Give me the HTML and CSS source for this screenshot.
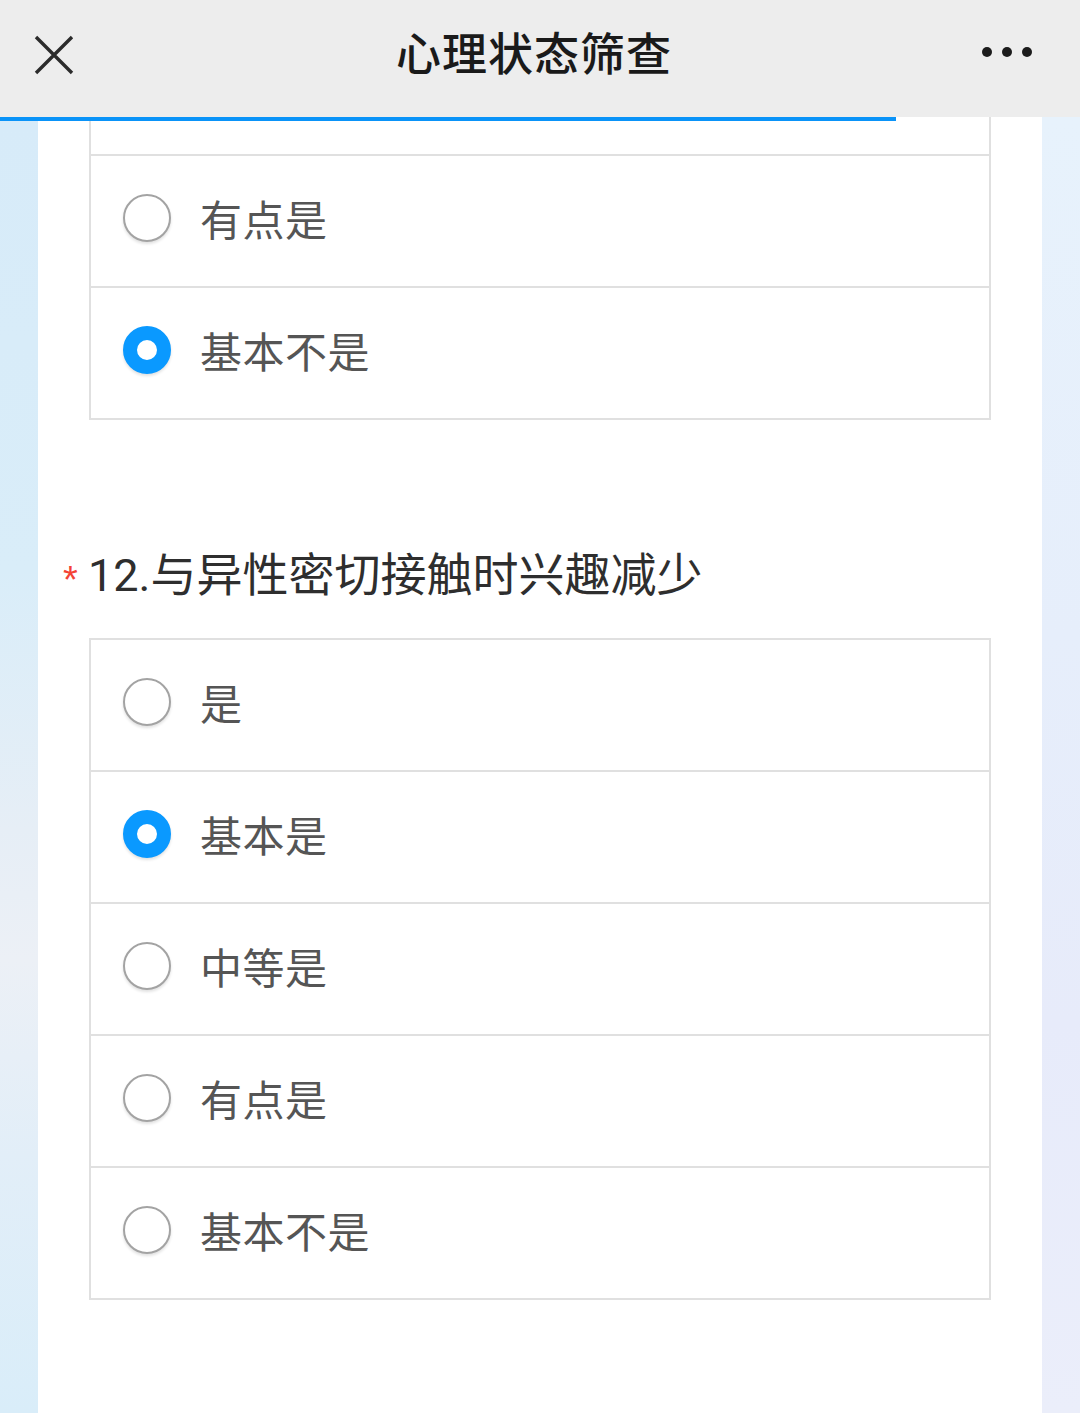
FILE: index.html
```html
<!DOCTYPE html>
<html lang="zh-CN">
<head>
<meta charset="utf-8">
<title>心理状态筛查</title>
<link rel="stylesheet" href="styles.css">
</head>
<body>
<div class="app">
  <header class="nav">
    <button class="nav-btn close" aria-label="关闭">
      <svg width="40" height="40" viewBox="0 0 40 40"><path d="M2 2 L38 38 M38 2 L2 38" stroke="#2b2b2b" stroke-width="3.4" fill="none"/></svg>
    </button>
    <h1 class="nav-title">心理状态筛查</h1>
    <button class="nav-btn more" aria-label="更多">
      <svg width="52" height="12" viewBox="0 0 52 12"><circle cx="6" cy="6" r="5" fill="#1c1c1c"/><circle cx="26" cy="6" r="5" fill="#1c1c1c"/><circle cx="46" cy="6" r="5" fill="#1c1c1c"/></svg>
    </button>
    <div class="progress"><div class="progress-fill" style="width:896px"></div></div>
  </header>

  <div class="page">
    <div class="side side-left"></div>
    <main class="card">
      <div class="options">
        <div class="option option-partial"></div>
        <label class="option"><span class="radio"></span><span class="option-text">有点是</span></label>
        <label class="option"><span class="radio checked"></span><span class="option-text">基本不是</span></label>
      </div>

      <div class="question">
        <span class="required">*</span><span class="question-text"><span class="qnum">12.</span>与异性密切接触时兴趣减少</span>
      </div>

      <div class="options">
        <label class="option"><span class="radio"></span><span class="option-text">是</span></label>
        <label class="option"><span class="radio checked"></span><span class="option-text">基本是</span></label>
        <label class="option"><span class="radio"></span><span class="option-text">中等是</span></label>
        <label class="option"><span class="radio"></span><span class="option-text">有点是</span></label>
        <label class="option"><span class="radio"></span><span class="option-text">基本不是</span></label>
      </div>
    </main>
    <div class="side side-right"></div>
  </div>
</div>
</body>
</html>
```

FILE: styles.css
```css
* { box-sizing: border-box; }

html, body {
  margin: 0;
  padding: 0;
  width: 1080px;
  height: 1413px;
  overflow: hidden;
  background: #ffffff;
  font-family: "Noto Sans CJK SC", "Noto Sans", sans-serif;
}

.app {
  width: 1080px;
  height: 1413px;
  display: flex;
  flex-direction: column;
}

.nav {
  position: relative;
  height: 117px;
  flex: none;
  background: #ededed;
  display: flex;
  align-items: center;
  justify-content: space-between;
  padding: 0 47px 0 34px;
  z-index: 2;
}

.nav-btn {
  border: 0;
  background: none;
  padding: 0;
  display: flex;
  align-items: center;
}

.close { margin-top: -8px; }
.more { margin-top: -14px; }

.nav-title {
  margin: 0;
  position: absolute;
  left: 0;
  right: 0;
  top: 22px;
  text-align: center;
  font-size: 45px;
  line-height: 60px;
  font-weight: 500;
  color: #1a1a1a;
  letter-spacing: 1px;
  padding-right: 12px;
  pointer-events: none;
}

.progress {
  position: absolute;
  left: 0;
  right: 0;
  bottom: -4px;
  height: 4px;
}

.progress-fill {
  height: 4px;
  background: #0a93f8;
}

.page {
  flex: 1;
  display: flex;
  min-height: 0;
}

.side {
  width: 38px;
  flex: none;
}

.side-left {
  background: linear-gradient(180deg, #d7ebf9 0%, #d9edf9 35%, #e6eef6 55%, #ecf0f6 65%, #e2eef8 80%, #d9edf9 100%);
}

.side-right {
  background: linear-gradient(180deg, #e7f2fc 0%, #e6eefb 40%, #e7ebfa 70%, #ebeefa 100%);
}

.card {
  flex: 1;
  background: #ffffff;
  padding: 0 51px;
  display: flex;
  flex-direction: column;
}

.options {
  border: 2px solid #e0e0e0;
  display: flex;
  flex-direction: column;
}

.card > .options:first-child {
  border-top: 0;
}

.option {
  height: 132px;
  display: flex;
  align-items: center;
  padding-left: 32px;
  padding-bottom: 6px;
  gap: 29px;
  border-top: 2px solid #e0e0e0;
}

.option:first-child {
  height: 130px;
  border-top: 0;
}

.option.option-partial {
  height: 37px;
  padding: 0;
}

.radio {
  width: 48px;
  height: 48px;
  border-radius: 50%;
  border: 2px solid #a3a3a3;
  background: #ffffff;
  box-shadow: 0 2px 3px rgba(0, 0, 0, 0.12);
  flex: none;
}

.radio.checked {
  border: 14px solid #0a99ff;
}

.option-text {
  font-size: 42px;
  line-height: 56px;
  color: #555555;
  letter-spacing: 0.5px;
}

.question {
  display: flex;
  align-items: baseline;
  margin: 121px 0 37px -26px;
  height: 60px;
}

.required {
  color: #f44336;
  font-family: "Liberation Sans", sans-serif;
  font-size: 38px;
  line-height: 60px;
  width: 25px;
  flex: none;
  position: relative;
  top: 2px;
}

.question-text {
  font-size: 46px;
  line-height: 60px;
  color: #2e2e2e;
}

.qnum {
  font-family: Roboto, "Noto Sans", sans-serif;
  font-size: 45px;
}
```
